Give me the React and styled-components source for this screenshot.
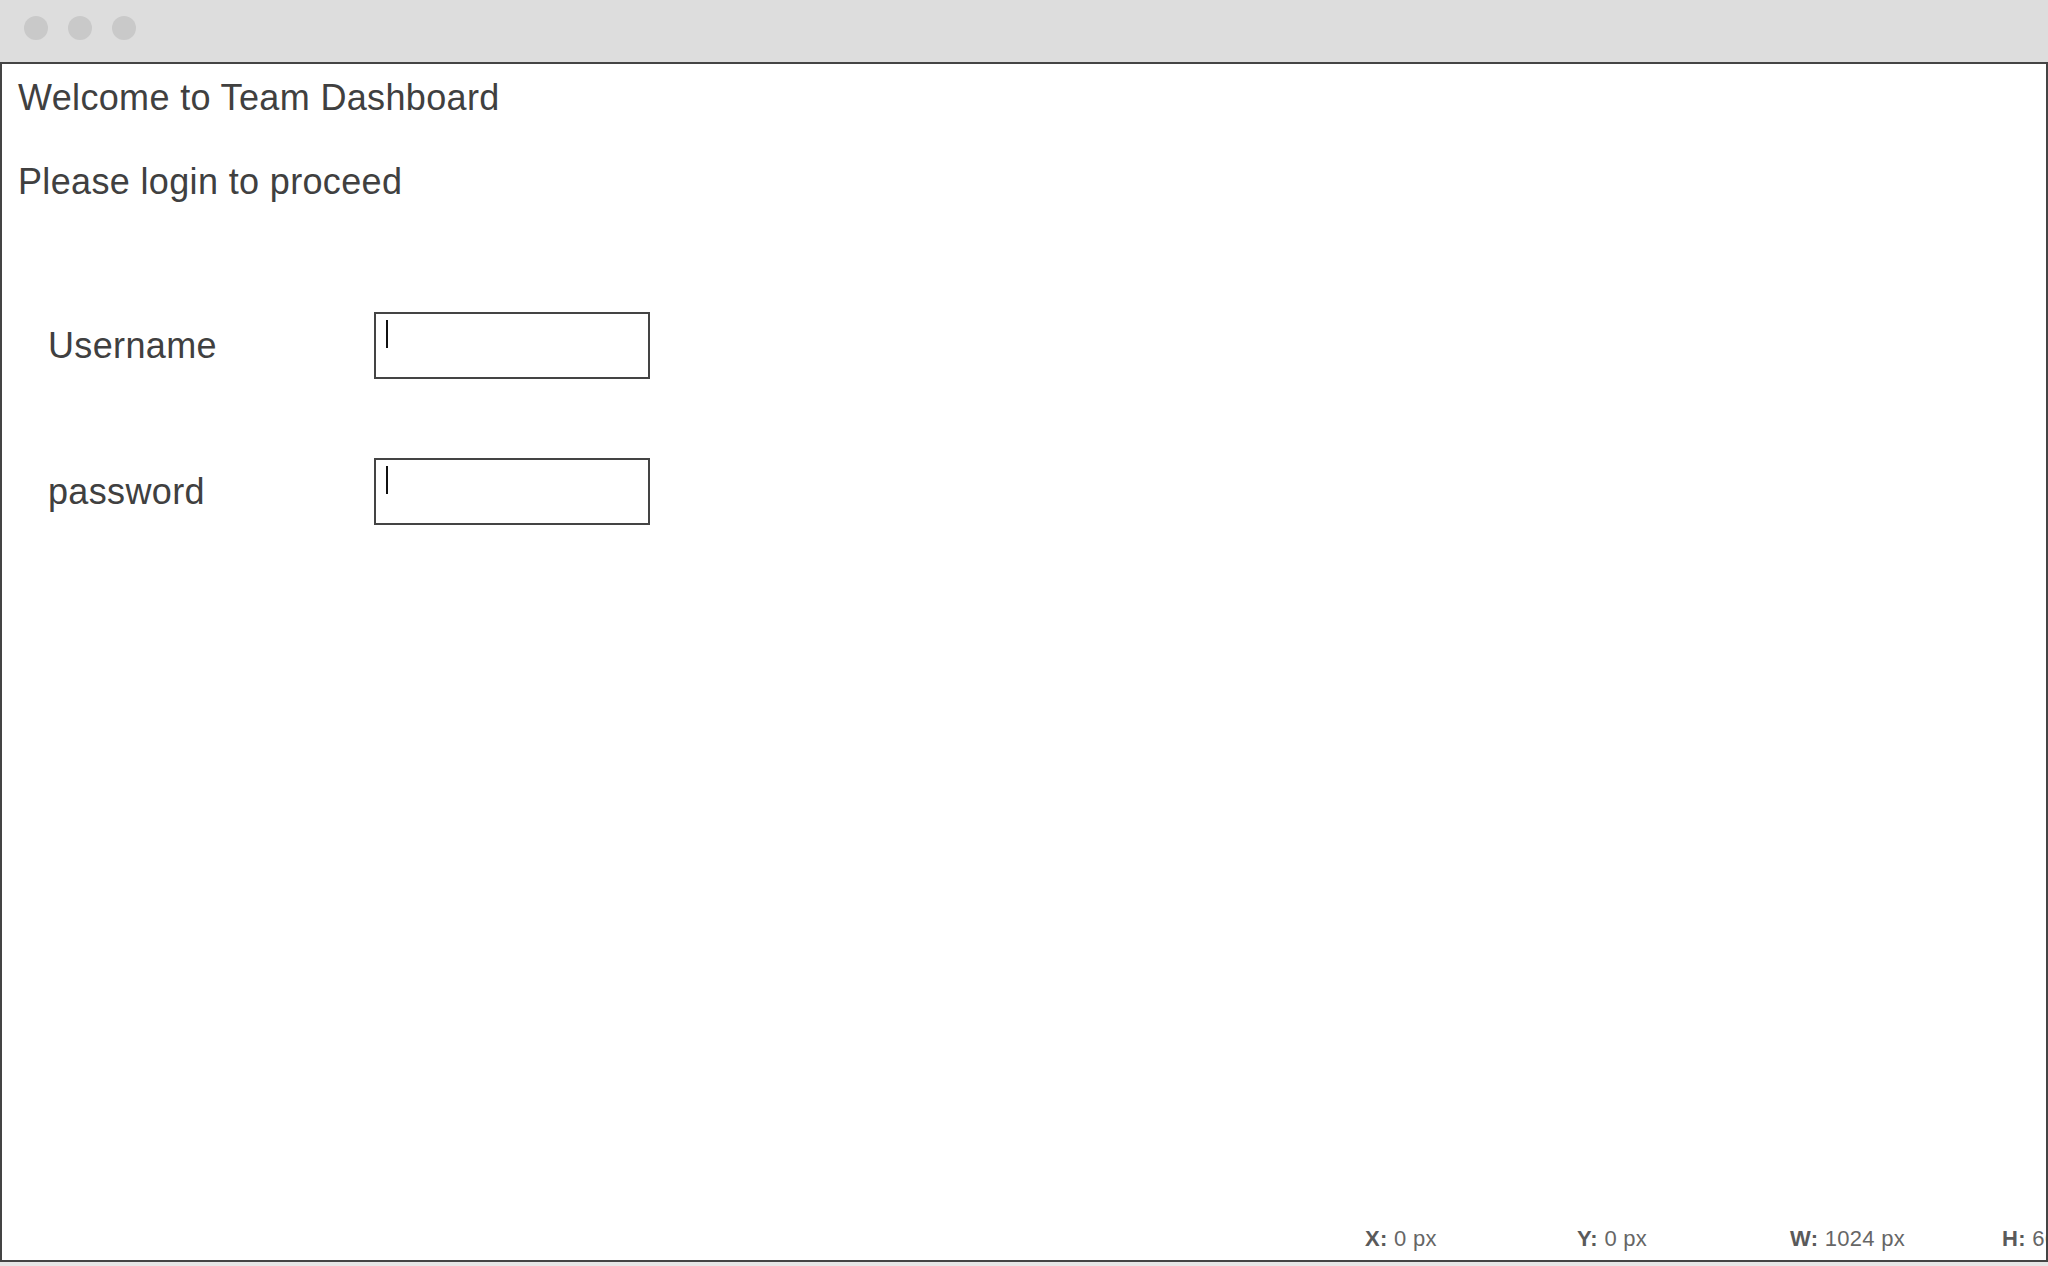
import React from "react";
import styled, { createGlobalStyle } from "styled-components";

const GlobalStyle = createGlobalStyle`
  * {
    box-sizing: border-box;
  }

  body {
    margin: 0;
    font-family: "Liberation Sans", Arial, sans-serif;
    background: #e6e6e6;
  }
`;

const fields = [
  { id: "username", label: "Username" },
  { id: "password", label: "password" },
];

const stats = [
  { label: "X:", value: "0 px" },
  { label: "Y:", value: "0 px" },
  { label: "W:", value: "1024 px" },
  { label: "H:", value: "662 px" },
];

const App = () => {
  return (
    <Wrapper>
      <GlobalStyle />
      <TitleBar>
        <Dot />
        <Dot />
        <Dot />
      </TitleBar>

      <Frame>
        <Content>
          <Heading>Welcome to Team Dashboard</Heading>
          <SubHeading>Please login to proceed</SubHeading>

          <Form>
            {fields.map((f) => (
              <FieldRow key={f.id}>
                <Label htmlFor={f.id}>{f.label}</Label>
                <InputBox id={f.id}>
                  <Caret />
                </InputBox>
              </FieldRow>
            ))}
          </Form>
        </Content>

        {/* position readout */}
        <StatsBar>
          {stats.map((s) => (
            <Stat key={s.label}>
              <b>{s.label}</b> {s.value}
            </Stat>
          ))}
        </StatsBar>
      </Frame>
    </Wrapper>
  );
};

const Wrapper = styled.div`
  width: 2048px;
  height: 1266px;
  display: flex;
  flex-direction: column;
  background: #e6e6e6;
  overflow: hidden;
`;

const TitleBar = styled.div`
  height: 62px;
  flex-shrink: 0;
  display: flex;
  align-items: center;
  gap: 20px;
  padding: 0 0 6px 24px;
  background: #dddddd;
`;

const Dot = styled.span`
  width: 24px;
  height: 24px;
  border-radius: 50%;
  background: #c9c9c9;
`;

const Frame = styled.div`
  height: 1200px;
  flex-shrink: 0;
  display: flex;
  flex-direction: column;
  border: 2px solid #444444;
  background: #ffffff;
  overflow: hidden;
`;

const Content = styled.div`
  flex: 1;
  padding: 13px 0 0 16px;
  color: #404040;
  letter-spacing: 0.35px;
`;

const Heading = styled.h1`
  margin: 0;
  font-size: 36px;
  font-weight: 400;
  line-height: 41px;
`;

const SubHeading = styled.p`
  margin: 43px 0 0;
  font-size: 36px;
  line-height: 41px;
`;

const Form = styled.div`
  display: flex;
  flex-direction: column;
  gap: 79px;
  margin-top: 110px;
  padding-left: 30px;
`;

const FieldRow = styled.div`
  display: flex;
  align-items: center;
`;

const Label = styled.label`
  width: 326px;
  font-size: 36px;
  line-height: 41px;
  color: #404040;
`;

const InputBox = styled.div`
  width: 276px;
  height: 67px;
  padding: 6px 0 0 10px;
  border: 2px solid #444444;
`;

const Caret = styled.span`
  display: block;
  width: 2px;
  height: 28px;
  background: #111111;
`;

const StatsBar = styled.div`
  display: grid;
  grid-template-columns: 212px 213px 212px 200px;
  padding: 0 0 8px 1363px;
  font-size: 22px;
  line-height: 26px;
  letter-spacing: 0.3px;
  color: #666666;
  white-space: nowrap;

  b {
    color: #5a5a5a;
  }
`;

const Stat = styled.span``;

export default App;
